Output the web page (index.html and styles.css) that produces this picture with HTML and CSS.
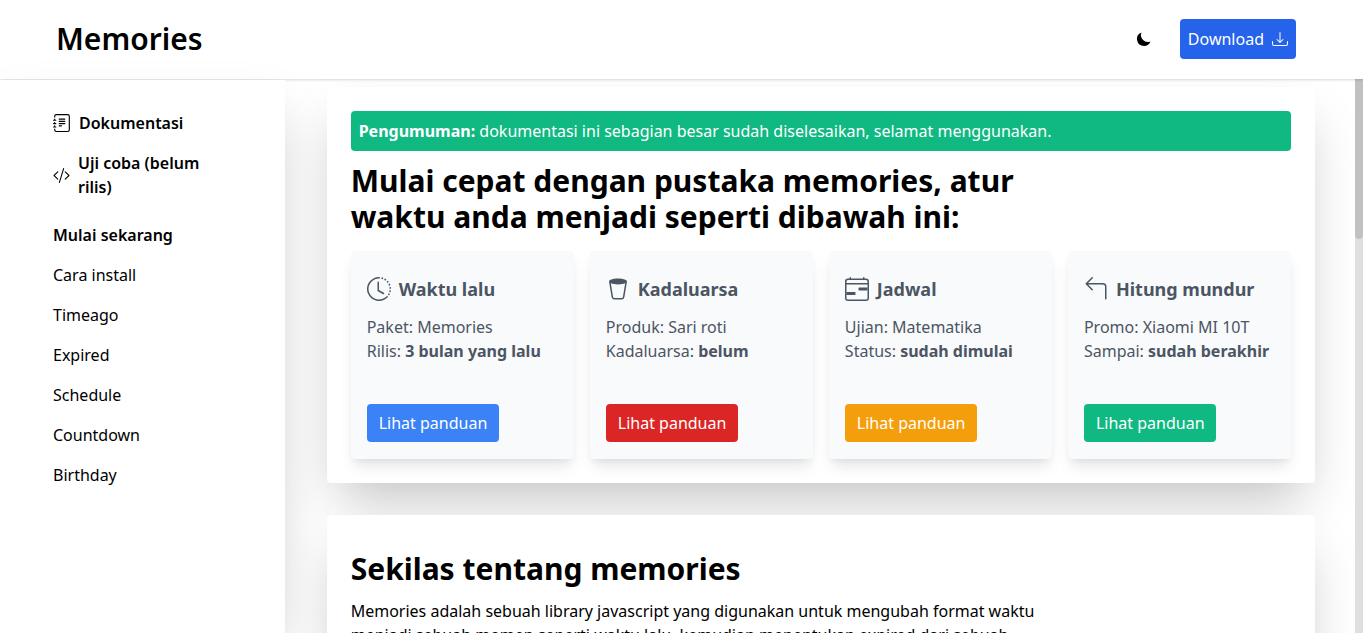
FILE: index.html
```html
<!DOCTYPE html>
<html lang="id">
<head>
<meta charset="utf-8">
<title>Memories</title>
<link rel="stylesheet" href="styles.css">
</head>
<body>
<header class="header">
  <div class="brand">Memories</div>
  <div class="actions">
    <svg class="moon" width="16" height="16" viewBox="0 0 16 16" fill="currentColor"><path d="M14.53 10.53a7 7 0 0 1-9.058-9.058A7.003 7.003 0 0 0 8 15a7.002 7.002 0 0 0 6.53-4.47z"/></svg>
    <a class="download">Download
      <svg width="16" height="16" viewBox="0 0 16 16" fill="currentColor"><path d="M.5 9.9a.5.5 0 0 1 .5.5v2.5a1 1 0 0 0 1 1h12a1 1 0 0 0 1-1v-2.5a.5.5 0 0 1 1 0v2.5a2 2 0 0 1-2 2H2a2 2 0 0 1-2-2v-2.5a.5.5 0 0 1 .5-.5z"/><path d="M7.646 11.854a.5.5 0 0 0 .708 0l3-3a.5.5 0 0 0-.708-.708L8.5 10.293V1.5a.5.5 0 0 0-1 0v8.793L5.354 8.146a.5.5 0 1 0-.708.708l3 3z"/></svg>
    </a>
  </div>
</header>
<div class="layout">
  <nav class="sidebar">
    <a class="nav-top">
      <svg width="18" height="18" viewBox="0 0 16 16" fill="currentColor"><path d="M5 10.5a.5.5 0 0 1 .5-.5h2a.5.5 0 0 1 0 1h-2a.5.5 0 0 1-.5-.5zm0-2a.5.5 0 0 1 .5-.5h5a.5.5 0 0 1 0 1h-5a.5.5 0 0 1-.5-.5zm0-2a.5.5 0 0 1 .5-.5h5a.5.5 0 0 1 0 1h-5a.5.5 0 0 1-.5-.5zm0-2a.5.5 0 0 1 .5-.5h5a.5.5 0 0 1 0 1h-5a.5.5 0 0 1-.5-.5z"/><path d="M3 0h10a2 2 0 0 1 2 2v12a2 2 0 0 1-2 2H3a2 2 0 0 1-2-2v-1h1v1a1 1 0 0 0 1 1h10a1 1 0 0 0 1-1V2a1 1 0 0 0-1-1H3a1 1 0 0 0-1 1v1H1V2a2 2 0 0 1 2-2z"/><path d="M1 5v-.5a.5.5 0 0 1 1 0V5h.5a.5.5 0 0 1 0 1h-2a.5.5 0 0 1 0-1H1zm0 3v-.5a.5.5 0 0 1 1 0V8h.5a.5.5 0 0 1 0 1h-2a.5.5 0 0 1 0-1H1zm0 3v-.5a.5.5 0 0 1 1 0v.5h.5a.5.5 0 0 1 0 1h-2a.5.5 0 0 1 0-1H1z"/></svg>
      <span>Dokumentasi</span>
    </a>
    <a class="nav-top">
      <svg width="17" height="17" viewBox="0 0 16 16" fill="currentColor"><path d="M10.478 1.647a.5.5 0 1 0-.956-.294l-4 13a.5.5 0 0 0 .956.294l4-13zM4.854 4.146a.5.5 0 0 1 0 .708L1.707 8l3.147 3.146a.5.5 0 0 1-.708.708l-3.5-3.5a.5.5 0 0 1 0-.708l3.5-3.5a.5.5 0 0 1 .708 0zm6.292 0a.5.5 0 0 0 0 .708L14.293 8l-3.147 3.146a.5.5 0 0 0 .708.708l3.5-3.5a.5.5 0 0 0 0-.708l-3.5-3.5a.5.5 0 0 0-.708 0z"/></svg>
      <span>Uji coba (belum rilis)</span>
    </a>
    <div class="nav-title">Mulai sekarang</div>
    <a class="nav-link">Cara install</a>
    <a class="nav-link">Timeago</a>
    <a class="nav-link">Expired</a>
    <a class="nav-link">Schedule</a>
    <a class="nav-link">Countdown</a>
    <a class="nav-link">Birthday</a>
  </nav>
  <main class="main">
    <section class="panel">
      <div class="notice"><b>Pengumuman:</b> dokumentasi ini sebagian besar sudah diselesaikan, selamat menggunakan.</div>
      <h1 class="heading">Mulai cepat dengan pustaka memories, atur waktu anda menjadi seperti dibawah ini:</h1>
      <div class="cards">
        <article class="card">
          <h2 class="card-title"><svg width="24" height="24" viewBox="0 0 16 16" fill="currentColor"><path d="M8.515 1.019A7 7 0 0 0 8 1V0a8 8 0 0 1 .589.022l-.074.997zm2.004.45a7.003 7.003 0 0 0-.985-.299l.219-.976c.383.086.76.2 1.126.342l-.36.933zm1.37.71a7.01 7.01 0 0 0-.439-.27l.493-.87a8.025 8.025 0 0 1 .979.654l-.615.789a6.996 6.996 0 0 0-.418-.302zm1.834 1.79a6.99 6.99 0 0 0-.653-.796l.724-.69c.27.285.52.59.747.91l-.818.576zm.744 1.352a7.08 7.08 0 0 0-.214-.468l.893-.45a7.976 7.976 0 0 1 .45 1.088l-.95.313a7.023 7.023 0 0 0-.179-.483zm.53 2.507a6.991 6.991 0 0 0-.1-1.025l.985-.17c.067.386.106.778.116 1.17l-1 .025zm-.131 1.538c.033-.17.06-.339.081-.51l.993.123a7.957 7.957 0 0 1-.23 1.155l-.964-.267c.046-.165.086-.332.12-.501zm-.952 2.379c.184-.29.346-.594.486-.908l.914.405c-.16.36-.345.706-.555 1.038l-.845-.535zm-.964 1.205c.122-.122.239-.248.35-.378l.758.653a8.073 8.073 0 0 1-.401.432l-.707-.707z"/><path d="M8 1a7 7 0 1 0 4.95 11.95l.707.707A8.001 8.001 0 1 1 8 0v1z"/><path d="M7.5 3a.5.5 0 0 1 .5.5v5.21l3.248 1.856a.5.5 0 0 1-.496.868l-3.5-2A.5.5 0 0 1 7 9V3.5a.5.5 0 0 1 .5-.5z"/></svg>Waktu lalu</h2>
          <p class="card-text">Paket: Memories<br>Rilis: <b>3 bulan yang lalu</b></p>
          <a class="btn blue">Lihat panduan</a>
        </article>
        <article class="card">
          <h2 class="card-title"><svg width="24" height="24" viewBox="0 0 16 16" fill="currentColor"><path d="M14 3a.702.702 0 0 1-.037.225l-1.684 10.104A2 2 0 0 1 10.305 15H5.694a2 2 0 0 1-1.973-1.671L2.037 3.225A.703.703 0 0 1 2 3c0-1.105 2.686-2 6-2s6 .895 6 2zM3.215 4.207l1.493 8.957a1 1 0 0 0 .986.836h4.612a1 1 0 0 0 .986-.836l1.493-8.957C11.69 4.689 9.954 5 8 5c-1.954 0-3.69-.311-4.785-.793z"/></svg>Kadaluarsa</h2>
          <p class="card-text">Produk: Sari roti<br>Kadaluarsa: <b>belum</b></p>
          <a class="btn red">Lihat panduan</a>
        </article>
        <article class="card">
          <h2 class="card-title"><svg width="24" height="24" viewBox="0 0 16 16" fill="currentColor"><path d="M3.5 0a.5.5 0 0 1 .5.5V1h8V.5a.5.5 0 0 1 1 0V1h1a2 2 0 0 1 2 2v11a2 2 0 0 1-2 2H2a2 2 0 0 1-2-2V3a2 2 0 0 1 2-2h1V.5a.5.5 0 0 1 .5-.5zM2 2a1 1 0 0 0-1 1v1h14V3a1 1 0 0 0-1-1H2zm13 3H1v9a1 1 0 0 0 1 1h12a1 1 0 0 0 1-1V5z"/><path d="M9 7.5a.5.5 0 0 1 .5-.5H15v2H9.5a.5.5 0 0 1-.5-.5v-1zm-2 3v1a.5.5 0 0 1-.5.5H1v-2h5.5a.5.5 0 0 1 .5.5z"/></svg>Jadwal</h2>
          <p class="card-text">Ujian: Matematika<br>Status: <b>sudah dimulai</b></p>
          <a class="btn amber">Lihat panduan</a>
        </article>
        <article class="card">
          <h2 class="card-title"><svg width="24" height="24" viewBox="0 0 16 16" fill="currentColor"><path d="M1.146 4.854a.5.5 0 0 1 0-.708l4-4a.5.5 0 1 1 .708.708L2.707 4H12.5A2.5 2.5 0 0 1 15 6.5v8a.5.5 0 0 1-1 0v-8A1.5 1.5 0 0 0 12.5 5H2.707l3.147 3.146a.5.5 0 1 1-.708.708l-4-4z"/></svg>Hitung mundur</h2>
          <p class="card-text">Promo: Xiaomi MI 10T<br>Sampai: <b>sudah berakhir</b></p>
          <a class="btn green">Lihat panduan</a>
        </article>
      </div>
    </section>
    <section class="panel about">
      <h1 class="heading">Sekilas tentang memories</h1>
      <p class="about-text">Memories adalah sebuah library javascript yang digunakan untuk mengubah format waktu menjadi sebuah momen seperti waktu lalu, kemudian menentukan expired dari sebuah</p>
    </section>
  </main>
  <div class="scrollbar"><div class="thumb"></div></div>
</div>
</body>
</html>
```

FILE: styles.css
```css
* { box-sizing: border-box; margin: 0; padding: 0; }
body {
  height: 633px;
  display: flex;
  flex-direction: column;
  overflow: hidden;
  background: #fff;
  color: #000;
  font: 16px/24px "Noto Sans", sans-serif;
}
svg { display: block; flex: none; }
.header {
  position: relative;
  z-index: 1;
  flex: none;
  height: 79px;
  padding: 0 67px 1px 56px;
  display: flex;
  align-items: center;
  justify-content: space-between;
  background: #fff;
  box-shadow: 0 1px 3px rgba(0,0,0,.1), 0 1px 2px rgba(0,0,0,.06);
}
.brand { font-size: 30px; line-height: 36px; font-weight: 600; }
.actions { display: flex; align-items: center; gap: 28px; }
.download {
  display: flex;
  align-items: center;
  gap: 8px;
  height: 40px;
  padding: 0 8px;
  border-radius: 4px;
  background: #2563eb;
  color: #fff;
}
.layout { flex: 1; min-height: 0; display: flex; }
.sidebar {
  position: relative;
  z-index: 2;
  flex: none;
  width: 285px;
  margin-top: 1px;
  padding: 31px 53px 0;
  background: #fff;
  box-shadow: 0 25px 50px -12px rgba(0,0,0,.25);
}
.nav-top { display: flex; align-items: center; gap: 8px; margin-bottom: 16px; font-weight: 600; }
.nav-title { margin: 24px 0 16px; font-weight: 600; }
.nav-link { display: block; margin-bottom: 16px; }
.main { flex: 1; overflow: hidden; padding: 8px 40px 0 41.7px; }
.panel {
  padding: 24px;
  border-radius: 4px;
  background: #fff;
  box-shadow: 0 25px 50px -12px rgba(0,0,0,.25);
}
.notice {
  padding: 8px;
  border-radius: 4px;
  background: #10b981;
  color: #fff;
}
.heading { max-width: 705px; margin-top: 12px; font-size: 30px; line-height: 36px; font-weight: 700; }
.cards { display: grid; grid-template-columns: repeat(4, 1fr); gap: 16px; margin-top: 16px; }
.card {
  height: 208px;
  padding: 26px 16px 17px;
  display: flex;
  flex-direction: column;
  align-items: flex-start;
  border-radius: 4px;
  background: #f9fafb;
  color: #4b5563;
  box-shadow: 0 10px 15px -3px rgba(0,0,0,.1), 0 4px 6px -2px rgba(0,0,0,.05);
}
.card-title { display: flex; align-items: center; gap: 8px; font-size: 18px; line-height: 24px; font-weight: 700; white-space: nowrap; }
.card-text { margin-top: 14px; white-space: nowrap; }
.btn { width: 132px; margin-top: auto; padding: 7px 0 7px 12px; border-radius: 4px; color: #fff; white-space: nowrap; }
.blue { background: #3b82f6; }
.red { background: #dc2626; }
.amber { background: #f59e0b; }
.green { background: #10b981; }
.about { margin-top: 32px; height: 400px; }
.about-text { max-width: 705px; margin-top: 12px; }
.scrollbar { flex: none; width: 8px; background: #dfdfdf; }
.thumb { height: 160px; border-radius: 0 0 4px 4px; background: #c1c1c1; }
```
